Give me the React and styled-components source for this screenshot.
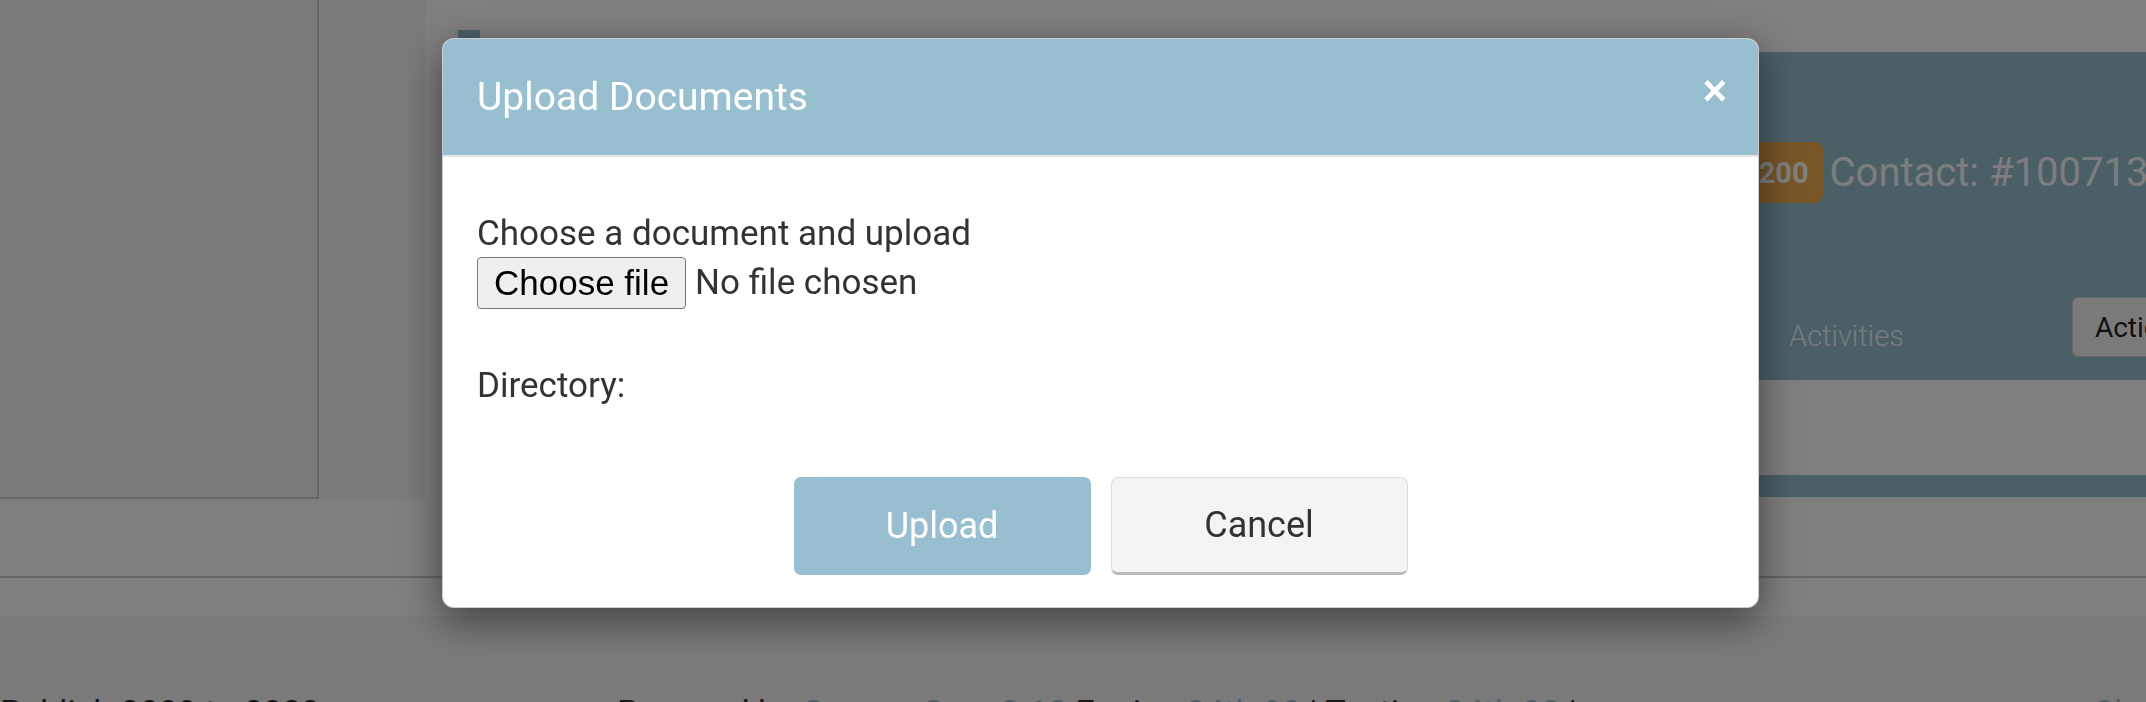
import React from 'react';
import styled, { createGlobalStyle } from 'styled-components';

const GlobalStyle = createGlobalStyle`
  html, body {
    margin: 0;
    padding: 0;
    overflow: hidden;
  }
  body {
    font-family: Roboto, "Noto Sans", Arial, sans-serif;
    color: #333;
    background: #f4f4f4;
  }
`;

const teal = '#97bfcf';

const Page = styled.div`
  width: 2146px;
  height: 702px;
  overflow: hidden;
  background: #f4f4f4;
`;

const Top = styled.div`
  display: flex;
  height: 499px;
`;

const Sidebar = styled.aside`
  width: 317px;
  height: 497px;
  flex-shrink: 0;
  border-right: 2px solid #cccccc;
  border-bottom: 2px solid #cccccc;
`;

const Content = styled.main`
  flex: 1;
  margin-left: 106px;
  background: #fff;
  padding: 30px 0 0 33px;
  display: flex;
  flex-direction: column;
  min-width: 0;
`;

const BackTab = styled.div`
  width: 22px;
  height: 22px;
  background: ${teal};
`;

const ContactPanel = styled.section`
  width: 1900px;
  height: 328px;
  box-sizing: border-box;
  background: ${teal};
  padding: 90px 0 23px 1270px;
  display: flex;
  flex-direction: column;
`;

const TitleRow = styled.div`
  display: flex;
  align-items: center;
  height: 61px;
  white-space: nowrap;
`;

const Badge = styled.span`
  display: inline-flex;
  align-items: center;
  height: 61px;
  padding: 0 14px;
  border-radius: 8px;
  background: #f0ad4e;
  color: #fff;
  font-weight: 700;
  font-size: 29px;
`;

const ContactTitle = styled.h2`
  margin: 0 0 0 7px;
  font-size: 40px;
  font-weight: 400;
  color: #fafafa;
`;

const TabRow = styled.div`
  display: flex;
  align-items: flex-end;
  margin-top: 94px;
  padding-left: 61px;
  gap: 168px;
  white-space: nowrap;
`;

const Tab = styled.span`
  font-size: 29px;
  font-weight: 300;
  line-height: 41px;
  color: rgba(255, 255, 255, 0.88);
`;

const ActionButton = styled.button`
  height: 60px;
  padding: 0 22px;
  border: 1px solid #cccccc;
  border-radius: 6px;
  background: #f4f4f4;
  color: #222;
  font-family: Roboto, sans-serif;
  font-size: 28px;
`;

const Strip = styled.div`
  margin-top: 95px;
  height: 22px;
  background: ${teal};
`;

const Band = styled.div`
  height: 117px;
  background: #fff;
  display: flex;
  flex-direction: column;
`;

const Rule = styled.hr`
  margin: 77px 0 0;
  border: 0;
  border-top: 2px solid #cccccc;
`;

const Footer = styled.footer`
  display: flex;
  padding-top: 72px;
  font-size: 34px;
  line-height: 48px;
  color: #333;
  white-space: nowrap;
`;

const FooterCol = styled.div`
  width: ${(p) => p.$w}px;
  flex-shrink: 0;
`;

const FooterLink = styled.a`
  color: ${teal};
  text-decoration: none;
`;

const Overlay = styled.div`
  position: fixed;
  inset: 0;
  background: rgba(0, 0, 0, 0.5);
`;

const Modal = styled.div`
  margin: 38px 0 0 442px;
  width: 1317px;
  box-sizing: border-box;
  background: #fff;
  border: 1px solid rgba(0, 0, 0, 0.2);
  border-radius: 12px;
  overflow: hidden;
  box-shadow: 0 12px 40px rgba(0, 0, 0, 0.5);
`;

const ModalHeader = styled.div`
  height: 116px;
  box-sizing: content-box;
  background: ${teal};
  border-bottom: 2px solid #e5e5e5;
  padding: 0 31px 0 34px;
  display: flex;
  align-items: center;
  justify-content: space-between;
`;

const ModalTitle = styled.h4`
  margin: 0;
  color: #fff;
  font-size: 39px;
  font-weight: 400;
  line-height: 1.1;
`;

const Close = styled.button`
  border: 0;
  background: none;
  padding: 0;
  margin-top: -12px;
  color: #fff;
  font-family: "Liberation Sans", Arial, sans-serif;
  font-weight: 700;
  font-size: 42px;
  line-height: 1;
  cursor: pointer;
`;

const ModalBody = styled.div`
  padding: 52px 34px 0;
  font-size: 35px;
  line-height: 50px;
  color: #333;
`;

const FileRow = styled.div`
  display: flex;
  align-items: center;
  gap: 9px;
  height: 52px;
  margin-top: -2px;
`;

const FileButton = styled.span`
  display: inline-flex;
  align-items: center;
  height: 52px;
  box-sizing: border-box;
  padding: 0 16px;
  border: 1px solid #767676;
  border-radius: 4px;
  background: #efefef;
  color: #000;
  font-family: "Liberation Sans", Arial, sans-serif;
  font-size: 35px;
`;

const Directory = styled.div`
  margin-top: 52px;
`;

const ModalFooter = styled.div`
  display: flex;
  justify-content: center;
  gap: 20px;
  padding: 66px 0 32px;
`;

const DialogButton = styled.button`
  width: 297px;
  height: 98px;
  box-sizing: border-box;
  border-radius: 7px;
  font-family: Roboto, sans-serif;
  font-size: 36px;
  cursor: pointer;
  background: ${(p) => (p.$primary ? teal : '#f4f4f4')};
  color: ${(p) => (p.$primary ? '#fff' : '#333')};
  border: ${(p) => (p.$primary ? '0' : '1px solid #dddddd')};
  border-bottom: ${(p) => (p.$primary ? '0' : '3px solid #bbbbbb')};
`;

export default function App() {
  return (
    <>
      <GlobalStyle />
      <Page>
        <Top>
          <Sidebar />
          <Content>
            <BackTab />
            <ContactPanel>
              <TitleRow>
                <Badge>1200</Badge>
                <ContactTitle>Contact: #100713</ContactTitle>
              </TitleRow>
              <TabRow>
                <Tab>Activities</Tab>
                <ActionButton>Actions</ActionButton>
              </TabRow>
            </ContactPanel>
            <Strip />
          </Content>
        </Top>
        <Band>
          <Rule />
        </Band>
        <Footer>
          <FooterCol $w={617}>Publish 2009 to 2023</FooterCol>
          <FooterCol $w={1477}>
            Powered by <FooterLink>Canvas Core 2.10</FooterLink> Engine{' '}
            <FooterLink>24th 08</FooterLink> | Testing <FooterLink>24th 08</FooterLink> |
          </FooterCol>
          <FooterCol $w={200}>
            <FooterLink>Show more</FooterLink>
          </FooterCol>
        </Footer>
      </Page>
      <Overlay>
        <Modal role="dialog">
          <ModalHeader>
            <ModalTitle>Upload Documents</ModalTitle>
            <Close aria-label="Close">×</Close>
          </ModalHeader>
          <ModalBody>
            <div>Choose a document and upload</div>
            <FileRow>
              <FileButton>Choose file</FileButton>
              <span>No file chosen</span>
            </FileRow>
            <Directory>Directory:</Directory>
          </ModalBody>
          <ModalFooter>
            <DialogButton $primary>Upload</DialogButton>
            <DialogButton>Cancel</DialogButton>
          </ModalFooter>
        </Modal>
      </Overlay>
    </>
  );
}
